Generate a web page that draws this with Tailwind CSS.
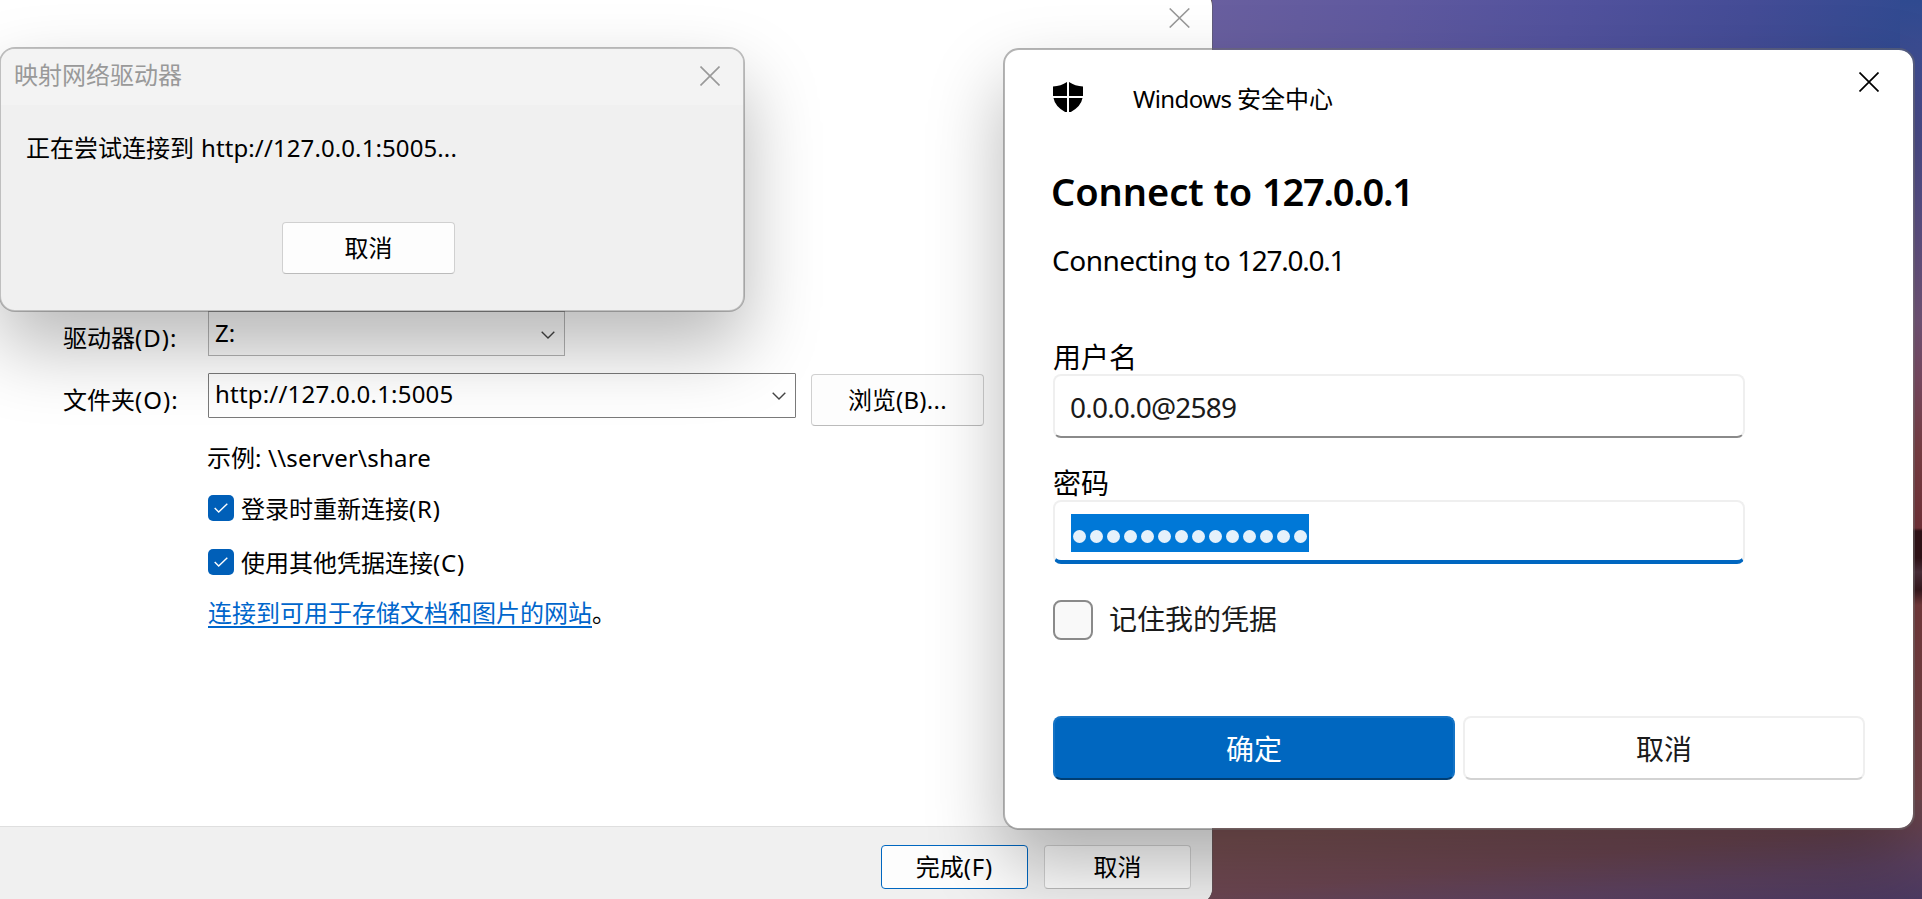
<!DOCTYPE html>
<html lang="zh-CN">
<head>
<meta charset="utf-8">
<title>映射网络驱动器</title>
<script src="https://cdn.jsdelivr.net/npm/@tailwindcss/browser@4"></script>
</head>
<body class="relative h-[899px] w-[1922px] overflow-hidden bg-[#5a3a48] font-['Noto_Sans','Noto_Sans_CJK_SC',sans-serif] text-[24px] leading-[32px] text-black">
  <!-- desktop wallpaper -->
  <div class="absolute top-0 left-[1212px] h-[60px] w-[710px] bg-[linear-gradient(100deg,#695f9f_0%,#5f599f_25%,#52529d_50%,#444c96_75%,#2f4a90_100%)]"></div>
  <div class="absolute top-0 left-[1900px] h-[830px] w-[22px] bg-[linear-gradient(180deg,#2f4a90_0px,#484e92_100px,#5c5490_200px,#7a5a80_320px,#84506a_380px,#84444a_450px,#7c363e_528px,#34141a_531px,#34141a_558px,#50323e_572px,#3a1a20_590px,#7c3e40_605px,#7a4a50_830px)]"></div>
  <div class="absolute top-[800px] left-[1200px] h-[99px] w-[722px] bg-[linear-gradient(174deg,#785052_25%,#6c4652_55%,#5c4160_78%,#4c3a62_100%)]"></div>

  <!-- wizard window -->
  <main class="absolute top-[-10px] left-[-10px] flex h-[914px] w-[1222px] flex-col overflow-hidden rounded-[16px] bg-white pt-[10px] pl-[10px] shadow-[0_0_0_1px_rgba(90,90,90,0.5)]">
    <header class="flex h-[48px] justify-end pt-[8px] pr-[22px]">
      <svg class="h-[20px] w-[21px]" viewBox="0 0 21 20" fill="none" stroke="#999" stroke-width="1.6"><path d="M.7.5 20.3 19.5M20.3.5.7 19.5"/></svg>
    </header>
    <section class="flex h-[778px] shrink-0 flex-col pt-[263px] pl-[64px]">
      <div class="flex h-[45px]">
        <label class="-ml-px w-[145px] pt-[11px]">驱动器<span class="tracking-[1px]">(D):</span></label>
        <div class="flex w-[357px] items-center justify-between border border-[#b4b4b4] bg-[#fbfbfb] pr-[9px] pb-[2px] pl-[6px]"><span>Z:</span>
          <svg class="mt-1 h-[8px] w-[14px]" viewBox="0 0 14 8" fill="none" stroke="#444" stroke-width="1.4"><path d="m.7.7 6.3 6.3L13.3.7"/></svg>
        </div>
      </div>
      <div class="mt-[17px] flex h-[53px] items-start">
        <label class="-ml-px w-[145px] pt-[11px]">文件夹<span class="tracking-[1px]">(O):</span></label>
        <div class="flex h-[45px] w-[588px] items-center justify-between rounded-[1px] border border-[#7a7a7a] bg-white pr-[9px] pb-[3px] pl-[6px]"><span class="tracking-[0.2px]">http://127.0.0.1:5005</span>
          <svg class="mt-[3px] h-[8px] w-[14px]" viewBox="0 0 14 8" fill="none" stroke="#444" stroke-width="1.4"><path d="m.7.7 6.3 6.3L13.3.7"/></svg>
        </div>
        <button class="mt-[1px] ml-[15px] h-[52px] w-[173px] rounded-[4px] border border-[#d0d0d0] border-b-[#bbb] bg-[#fdfdfd]">浏览<span class="tracking-[0.3px]">(B)...</span></button>
      </div>
      <div class="flex flex-col pl-[144px]">
        <p class="-ml-px mt-[16px] h-[32px]">示例<span class="tracking-[0.2px]">: \\server\share</span></p>
        <label class="mt-[17px] flex h-[36px] items-center gap-[7px]">
          <span class="mb-[2px] flex size-[26px] items-center justify-center rounded-[5px] bg-[#005fb8]"><svg class="h-[10px] w-[14px]" viewBox="0 0 14 10" fill="none" stroke="#fff" stroke-width="1.4"><path d="m.7 5 4 4L13.3.7"/></svg></span>
          <span>登录时重新连接<span class="tracking-[0.8px]">(R)</span></span>
        </label>
        <label class="mt-[18px] flex h-[36px] items-center gap-[7px]">
          <span class="mb-[2px] flex size-[26px] items-center justify-center rounded-[5px] bg-[#005fb8]"><svg class="h-[10px] w-[14px]" viewBox="0 0 14 10" fill="none" stroke="#fff" stroke-width="1.4"><path d="m.7 5 4 4L13.3.7"/></svg></span>
          <span>使用其他凭据连接<span class="tracking-[0.8px]">(C)</span></span>
        </label>
        <p class="mt-[16px] flex h-[32px]"><a class="h-[31px] border-b-2 border-[#0066cc] text-[#0066cc]">连接到可用于存储文档和图片的网站</a>。</p>
      </div>
    </section>
    <footer class="flex h-[78px] shrink-0 justify-end gap-[16px] border-t border-[#dfdfdf] bg-[#f0f0f0] pt-[18px] pr-[21px]">
      <button class="h-[44px] w-[147px] rounded-[4px] border border-[#0067c0] bg-[#fdfdfd]">完成<span class="tracking-[0.8px]">(F)</span></button>
      <button class="h-[44px] w-[147px] rounded-[4px] border border-[#d0d0d0] border-b-[#bbb] bg-[#fdfdfd]">取消</button>
    </footer>
  </main>

  <!-- connection progress dialog -->
  <section class="absolute top-[47px] left-[-1px] flex h-[265px] w-[746px] flex-col rounded-[16px] border-2 border-black/25 bg-[#f0f0f0] bg-clip-padding shadow-[0_35px_75px_rgba(0,0,0,0.28)]">
    <header class="flex h-[56px] items-start justify-between rounded-t-[14px] bg-[#f3f3f3] pt-[10px] pr-[23px] pl-[13px] text-[#999]"><span>映射网络驱动器</span>
      <svg class="mt-[7px] size-[20px]" viewBox="0 0 20 20" fill="none" stroke="#999" stroke-width="1.6"><path d="m.5.5 19 19M19.5.5l-19 19"/></svg>
    </header>
    <p class="pt-[27px] pl-[25px]">正在尝试连接到<span class="ml-[7px] tracking-[0.1px]">http://127.0.0.1:5005...</span></p>
    <button class="mt-[58px] ml-[281px] h-[52px] w-[173px] rounded-[4px] border border-[#d0d0d0] border-b-[#bbb] bg-[#fdfdfd]">取消</button>
  </section>

  <!-- credential dialog -->
  <section class="absolute top-[48px] left-[1003px] flex h-[782px] w-[912px] flex-col rounded-[16px] border-2 border-[#696969]/50 bg-white bg-clip-padding pl-[48px] text-[28px] leading-[36px] shadow-[0_35px_75px_rgba(0,0,0,0.28)]">
    <header class="flex h-[62px] items-start text-[24px]">
      <svg class="mt-[32px] size-[30px]" viewBox="0 0 30 30"><path d="M14 0v14H0V4.500Q8 4 14 0ZM16 0v14h14V4.500Q22 4 16 0ZM14 16v15Q2 25 .5 16ZM16 16v15Q28 25 29.500 16Z"/></svg>
      <span class="mt-[31px] ml-[50px]"><span class="tracking-[-0.6px]">Windows </span>安全中心</span>
      <svg class="mt-[22px] mr-[34px] ml-auto size-[20px]" viewBox="0 0 20 20" fill="none" stroke="#000" stroke-width="1.7"><path d="m.5.5 19 19M19.5.5l-19 19"/></svg>
    </header>
    <h1 class="-ml-[2px] mt-[53px] h-[52px] text-[38px] leading-[52px] font-semibold tracking-[-0.05px]">Connect to <span class="tracking-[-1.25px]">127.0.0.1</span></h1>
    <p class="-ml-px mt-[25px] h-[36px] tracking-[-0.5px]">Connecting to <span class="tracking-[-1.25px]">127.0.0.1</span></p>
    <label class="mt-[61px] h-[35px]">用户名</label>
    <div class="h-[64px] w-[692px] rounded-[8px] border-2 border-[#efefef] border-b-[#8a8a8a] px-[15px] pt-[13px] tracking-[-0.8px] text-[#1a1a1a]">0.0.0.0@2589</div>
    <label class="mt-[27px] h-[35px]">密码</label>
    <div class="h-[64px] w-[692px] rounded-[8px] border-2 border-b-4 border-[#efefef] border-b-[#0067c0] px-[16px] pt-[12px]">
      <div class="flex h-[38px] w-[238px] items-center gap-[4px] bg-[#0078d7] pt-[6px] pl-[2px]">
        <i class="size-[13px] rounded-full bg-[#e5f1fb]"></i><i class="size-[13px] rounded-full bg-[#e5f1fb]"></i><i class="size-[13px] rounded-full bg-[#e5f1fb]"></i><i class="size-[13px] rounded-full bg-[#e5f1fb]"></i><i class="size-[13px] rounded-full bg-[#e5f1fb]"></i><i class="size-[13px] rounded-full bg-[#e5f1fb]"></i><i class="size-[13px] rounded-full bg-[#e5f1fb]"></i><i class="size-[13px] rounded-full bg-[#e5f1fb]"></i><i class="size-[13px] rounded-full bg-[#e5f1fb]"></i><i class="size-[13px] rounded-full bg-[#e5f1fb]"></i><i class="size-[13px] rounded-full bg-[#e5f1fb]"></i><i class="size-[13px] rounded-full bg-[#e5f1fb]"></i><i class="size-[13px] rounded-full bg-[#e5f1fb]"></i><i class="size-[13px] rounded-full bg-[#e5f1fb]"></i>
      </div>
    </div>
    <label class="mt-[36px] flex h-[40px] items-center gap-[16px] text-[#1a1a1a]"><span class="size-[40px] rounded-[8px] border-2 border-[#8a8a8a] bg-[#f9f9f9]"></span><span class="pb-[2px]">记住我的凭据</span></label>
    <div class="mt-[76px] flex gap-[8px]">
      <button class="h-[64px] w-[402px] rounded-[8px] border-2 border-[#1473c5] border-b-[#003e73] bg-[#0067c0] pt-[2px] text-white">确定</button>
      <button class="h-[64px] w-[402px] rounded-[8px] border-2 border-[#efefef] border-b-[#d3d3d3] bg-white pt-[2px] text-[#1a1a1a]">取消</button>
    </div>
  </section>
</body>
</html>
